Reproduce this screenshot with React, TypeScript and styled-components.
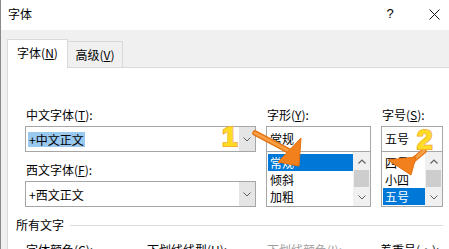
import React from "react";
import styled, { createGlobalStyle } from "styled-components";

const GlobalStyle = createGlobalStyle`
  html, body {
    margin: 0;
    padding: 0;
    background: #fff;
  }

  body {
    font-family: "Noto Sans CJK SC", "Microsoft YaHei", sans-serif;
    font-size: 12px;
    line-height: 16px;
    color: #000;
  }
`;

const Window = styled.div`
  position: relative;
  box-sizing: border-box;
  width: 449px;
  height: 249px;
  overflow: hidden;
  display: flex;
  flex-direction: column;
  background: #f0f0f0;
  border-left: 1px solid #8a8a8a;
`;

const TitleBar = styled.div`
  flex-shrink: 0;
  height: 30px;
  box-sizing: border-box;
  display: flex;
  align-items: center;
  padding: 0 0 2px 7px;
  background: #fff;
`;

const TitleText = styled.span`
  font-size: 12px;
`;

const HelpButton = styled.div`
  margin-left: auto;
  width: 28px;
  text-align: center;
  font-family: "Liberation Sans", sans-serif;
  font-size: 13px;
`;

const CloseButton = styled.div`
  width: 30px;
  margin-left: 15px;
  display: flex;
  justify-content: center;
  align-items: center;
`;

const Body = styled.div`
  flex: 1;
  display: flex;
  flex-direction: column;
  padding: 9px 0 0 6px;
`;

const Tabs = styled.div`
  display: flex;
  align-items: flex-end;
  height: 28px;
`;

const Tab = styled.div<{ $active?: boolean }>`
  box-sizing: border-box;
  display: flex;
  justify-content: center;
  align-items: center;
  border: 1px solid #d9d9d9;
  border-bottom: none;
  ${(p) =>
    p.$active
      ? `
    width: 61px;
    height: 29px;
    margin-bottom: -1px;
    background: #fff;
    position: relative;
    z-index: 1;
    padding-bottom: 2px;
  `
      : `
    width: 55px;
    height: 26px;
    border-left: none;
    background: #f0f0f0;
  `}
`;

const Panel = styled.div`
  flex: 1;
  background: #fff;
  border: 1px solid #d9d9d9;
  border-right: none;
  padding: 39px 0 0 8px;
`;

const FontGrid = styled.div`
  display: grid;
  grid-template-columns: 231px 105px 62px;
  column-gap: 10px;
  align-items: start;
  margin-left: 9px;
`;

const Field = styled.div`
  display: flex;
  flex-direction: column;
`;

const Label = styled.div<{ $top?: number }>`
  line-height: 16px;
  padding-left: 1px;
  margin-top: ${(p) => p.$top ?? 0}px;
  margin-bottom: 3px;
  white-space: nowrap;
`;

const ComboBox = styled.div`
  box-sizing: border-box;
  height: 26px;
  display: flex;
  align-items: center;
  border: 1px solid #a6a6a6;
  background: #fff;
  padding-left: 2px;
`;

const ComboValue = styled.span<{ $selected?: boolean }>`
  padding: 0 1px;
  line-height: 15px;
  background: ${(p) => (p.$selected ? "#99c9ef" : "transparent")};
`;

const ComboButton = styled.div`
  margin-left: auto;
  align-self: stretch;
  width: 16px;
  display: flex;
  justify-content: center;
  align-items: center;
  background: #e5e5e5;
`;

const EditBox = styled.div`
  box-sizing: border-box;
  height: 26px;
  display: flex;
  align-items: center;
  border: 1px solid #a6a6a6;
  padding-left: 3px;
`;

const ListBox = styled.div`
  box-sizing: border-box;
  height: 55px;
  display: flex;
  border: 1px solid #a6a6a6;
  border-top: none;
`;

const ListItems = styled.div`
  flex: 1;
  display: flex;
  flex-direction: column;
  padding: 2px 0 0 1px;
  min-width: 0;
`;

const ListItem = styled.div<{ $selected?: boolean }>`
  height: 17px;
  line-height: 17px;
  padding-left: 2px;
  white-space: nowrap;
  background: ${(p) => (p.$selected ? "#0078d7" : "transparent")};
  color: ${(p) => (p.$selected ? "#fff" : "#000")};
`;

const ScrollBar = styled.div`
  width: 17px;
  display: flex;
  flex-direction: column;
  padding-top: 1px;
  background: #f0f0f0;
`;

const ScrollArrow = styled.div`
  height: 17px;
  display: flex;
  justify-content: center;
  align-items: center;
`;

const ScrollThumb = styled.div`
  height: 17px;
  margin: 0 1px;
  background: #cdcdcd;
`;

const ScrollTrack = styled.div`
  flex: 1;
`;

const SectionRow = styled.div`
  display: flex;
  align-items: center;
  margin-top: 10px;
  line-height: 16px;
`;

const SectionRule = styled.div`
  flex: 1;
  height: 1px;
  margin: 1px 6px 0 6px;
  background: #dcdcdc;
`;

const BottomRow = styled.div`
  display: grid;
  grid-template-columns: 121px 120px 113px auto;
  margin: 9px 0 0 10px;
  line-height: 16px;
`;

const BottomLabel = styled.div<{ $disabled?: boolean }>`
  white-space: nowrap;
  color: ${(p) => (p.$disabled ? "#a0a0a0" : "#000")};
`;

const Overlay = styled.svg`
  position: absolute;
  left: -1px;
  top: 0;
  pointer-events: none;
  z-index: 2;
`;

const StepBadge = styled.span<{ $x: number; $y: number }>`
  position: absolute;
  left: ${(p) => p.$x}px;
  top: ${(p) => p.$y}px;
  z-index: 3;
  font-family: "Liberation Sans", Arial, sans-serif;
  font-weight: 700;
  font-size: 28px;
  line-height: 28px;
  color: #ffdc1f;
  -webkit-text-stroke: 2px #f39a0c;
  paint-order: stroke fill;
  text-shadow: 0 0 2px #fff4b0;
`;

const ChevronDown = () => (
  <svg width="8" height="5" viewBox="0 0 8 5">
    <polyline points="0.5,0.5 4,4 7.5,0.5" fill="none" stroke="#606060" strokeWidth="1" />
  </svg>
);

const ChevronUp = () => (
  <svg width="8" height="5" viewBox="0 0 8 5">
    <polyline points="0.5,4.5 4,1 7.5,4.5" fill="none" stroke="#606060" strokeWidth="1.2" />
  </svg>
);

const CloseIcon = () => (
  <svg width="11" height="11" viewBox="0 0 11 11">
    <path d="M0.5 0.5 L10.5 10.5 M10.5 0.5 L0.5 10.5" stroke="#111" strokeWidth="1" />
  </svg>
);

interface ListProps {
  items: string[];
  selected: number;
}

const ScrollList: React.FC<ListProps> = ({ items, selected }) => (
  <ListBox>
    <ListItems>
      {items.map((item, i) => (
        <ListItem key={item} $selected={i === selected}>
          {item}
        </ListItem>
      ))}
    </ListItems>
    <ScrollBar>
      <ScrollArrow>
        <ChevronUp />
      </ScrollArrow>
      <ScrollThumb />
      <ScrollTrack />
      <ScrollArrow>
        <ChevronDown />
      </ScrollArrow>
    </ScrollBar>
  </ListBox>
);

const App: React.FC = () => {
  return (
    <>
      <GlobalStyle />
      <Window>
        <TitleBar>
          <TitleText>字体</TitleText>
          <HelpButton>?</HelpButton>
          <CloseButton>
            <CloseIcon />
          </CloseButton>
        </TitleBar>
        <Body>
          <Tabs>
            <Tab $active>
              字体(<u>N</u>)
            </Tab>
            <Tab>
              高级(<u>V</u>)
            </Tab>
          </Tabs>
          <Panel>
            <FontGrid>
              <Field>
                <Label>
                  中文字体(<u>T</u>):
                </Label>
                <ComboBox>
                  <ComboValue $selected>+中文正文</ComboValue>
                  <ComboButton>
                    <ChevronDown />
                  </ComboButton>
                </ComboBox>
                <Label $top={10}>
                  西文字体(<u>F</u>):
                </Label>
                <ComboBox>
                  <ComboValue>+西文正文</ComboValue>
                  <ComboButton>
                    <ChevronDown />
                  </ComboButton>
                </ComboBox>
              </Field>
              <Field>
                <Label>
                  字形(<u>Y</u>):
                </Label>
                <EditBox>常规</EditBox>
                <ScrollList items={["常规", "倾斜", "加粗"]} selected={0} />
              </Field>
              <Field>
                <Label>
                  字号(<u>S</u>):
                </Label>
                <EditBox>五号</EditBox>
                <ScrollList items={["四号", "小四", "五号"]} selected={2} />
              </Field>
            </FontGrid>
            <SectionRow>
              所有文字
              <SectionRule />
            </SectionRow>
            <BottomRow>
              <BottomLabel>
                字体颜色(<u>C</u>):
              </BottomLabel>
              <BottomLabel>
                下划线线型(<u>U</u>):
              </BottomLabel>
              <BottomLabel $disabled>
                下划线颜色(<u>I</u>):
              </BottomLabel>
              <BottomLabel>
                着重号(·):
              </BottomLabel>
            </BottomRow>
          </Panel>
        </Body>

        {/* tutorial annotations drawn over the dialog */}
        <Overlay width="449" height="249" viewBox="0 0 449 249">
          <line x1="255" y1="133" x2="289" y2="151" stroke="#e5720f" strokeWidth="5.5" strokeLinecap="round" />
          <line x1="255" y1="133" x2="289" y2="151" stroke="#f7a045" strokeWidth="3" strokeLinecap="round" />
          <polygon points="301,138 278,162 299,166" fill="#f2801d" stroke="#e86f0c" strokeWidth="1" strokeLinejoin="round" />
          <line x1="424" y1="151" x2="412" y2="161" stroke="#e5720f" strokeWidth="5.5" strokeLinecap="round" />
          <line x1="424" y1="151" x2="412" y2="161" stroke="#f7a045" strokeWidth="3" strokeLinecap="round" />
          <polygon points="388,160 416,157 411,175" fill="#f2801d" stroke="#e86f0c" strokeWidth="1" strokeLinejoin="round" />
        </Overlay>
        <StepBadge $x={221} $y={123}>
          1
        </StepBadge>
        <StepBadge $x={416} $y={126}>
          2
        </StepBadge>
      </Window>
    </>
  );
};

export default App;
